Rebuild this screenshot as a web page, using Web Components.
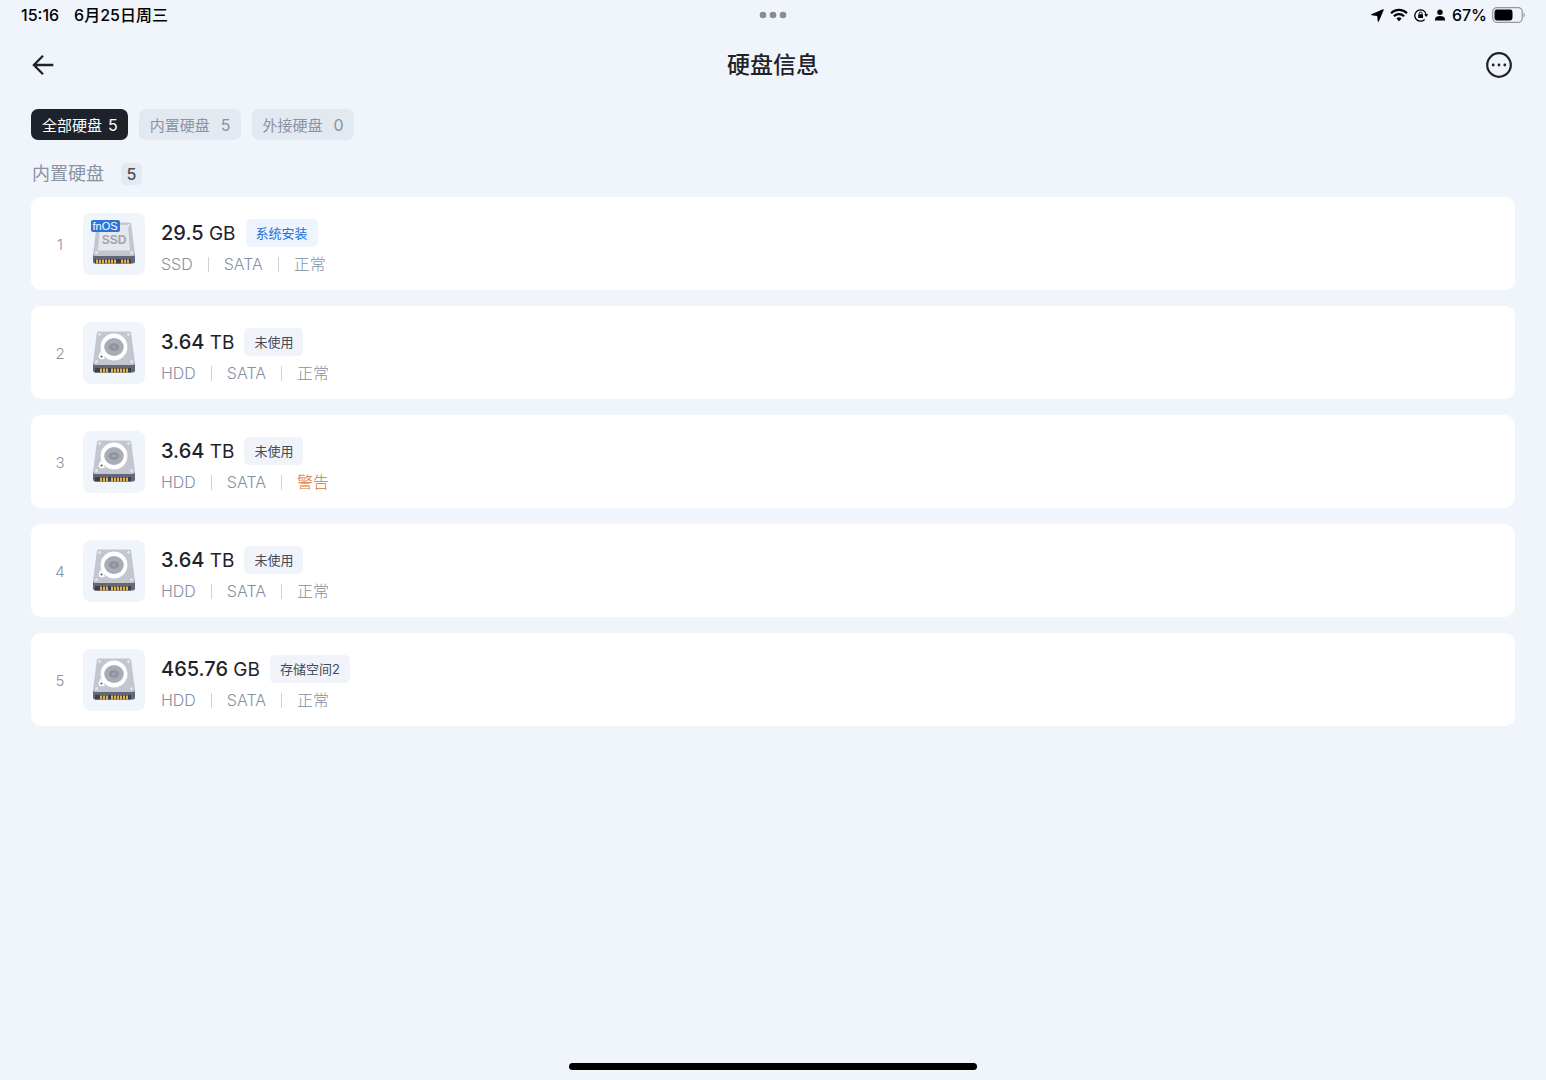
<!DOCTYPE html>
<html lang="zh-CN">
<head>
<meta charset="UTF-8">
<meta name="viewport" content="width=device-width, initial-scale=1.0">
<title>硬盘信息</title>
<style>
  body {
    margin: 0;
    background: #f0f4fb;
    color: #1f2329;
    font-family: Inter, 'Noto Sans CJK SC', sans-serif;
  }
</style>
</head>
<body>
<disk-page>
  <status-bar slot="status" time="15:16" date="6月25日周三" battery="67"></status-bar>
  <nav-header slot="header">硬盘信息</nav-header>
  <filter-tabs slot="filters">
    <filter-tab count="5" active>全部硬盘</filter-tab>
    <filter-tab count="5">内置硬盘</filter-tab>
    <filter-tab count="0">外接硬盘</filter-tab>
  </filter-tabs>
  <disk-group label="内置硬盘" count="5">
    <disk-card index="1" size="29.5" unit="GB" type="SSD" bus="SATA" status="正常" system>系统安装</disk-card>
    <disk-card index="2" size="3.64" unit="TB" type="HDD" bus="SATA" status="正常">未使用</disk-card>
    <disk-card index="3" size="3.64" unit="TB" type="HDD" bus="SATA" status="警告" warning>未使用</disk-card>
    <disk-card index="4" size="3.64" unit="TB" type="HDD" bus="SATA" status="正常">未使用</disk-card>
    <disk-card index="5" size="465.76" unit="GB" type="HDD" bus="SATA" status="正常">存储空间2</disk-card>
  </disk-group>
</disk-page>

<script>
class DiskPage extends HTMLElement {
  connectedCallback() {
    this.attachShadow({ mode: 'open' });
    this.shadowRoot.innerHTML = `
      <style>
        :host {
          display: flex;
          flex-direction: column;
          min-height: 100vh;
        }
        main {
          flex: 1;
          padding: 10px 31px 24px;
        }
        footer {
          display: flex;
          justify-content: center;
          padding-bottom: 10px;
        }
        .home {
          width: 408px;
          max-width: 60%;
          height: 7px;
          border-radius: 4px;
          background: #000;
        }
      </style>
      <slot name="status"></slot>
      <slot name="header"></slot>
      <main>
        <slot name="filters"></slot>
        <slot></slot>
      </main>
      <footer><div class="home"></div></footer>
    `;
  }
}
customElements.define('disk-page', DiskPage);

class StatusBar extends HTMLElement {
  connectedCallback() {
    this.attachShadow({ mode: 'open' });
    this.shadowRoot.innerHTML = `
      <style>
        :host {
          display: grid;
          grid-template-columns: 1fr auto 1fr;
          align-items: center;
          height: 30px;
          padding: 0 21px;
          font-size: 16px;
          font-weight: 500;
          line-height: 24px;
          color: #000;
        }
        svg { display: block; }
        .left { display: flex; gap: 15px; }
        .right {
          display: flex;
          align-items: center;
          justify-content: flex-end;
          gap: 6px;
        }
        .battery {
          display: flex;
          align-items: center;
          gap: 5px;
        }
      </style>
      <div class="left">
        <span>${this.getAttribute('time')}</span>
        <span>${this.getAttribute('date')}</span>
      </div>
      <svg width="28" height="8" viewBox="0 0 28 8" fill="#8a8c91">
        <circle cx="4" cy="4" r="3.3"/><circle cx="14" cy="4" r="3.3"/><circle cx="24" cy="4" r="3.3"/>
      </svg>
      <div class="right">
        <svg width="13" height="13" viewBox="0 0 13 13">
          <path d="M12.2.8 7.3 12.2 6.7 6.4.7 5.8z" stroke="#000" stroke-width="1.1" stroke-linejoin="round"/>
        </svg>
        <svg width="18" height="14" viewBox="0 0 18 14" fill="none" stroke="#000" stroke-width="2.2">
          <path d="M1 5.2a11.3 11.3 0 0 1 16 0"/>
          <path d="M3.9 8.3a7.2 7.2 0 0 1 10.2 0"/>
          <path d="M9 13.2 6.4 10.6a3.7 3.7 0 0 1 5.2 0z" fill="#000" stroke="none"/>
        </svg>
        <svg width="14" height="14" viewBox="0 0 14 14" fill="none" stroke="#000" stroke-width="1.3">
          <path d="M10.6 11.5A5.7 5.7 0 1 1 12.2 7"/>
          <path d="M10.2 6.3h4L12.2 9z" fill="#000" stroke="none"/>
          <rect x="4.2" y="6.3" width="4.8" height="3.7" rx=".6" fill="#000" stroke="none"/>
          <path d="M5.2 6.5V5.4a1.4 1.4 0 0 1 2.8 0v1.1" stroke-width="1"/>
        </svg>
        <svg width="12" height="12" viewBox="0 0 12 12">
          <circle cx="6" cy="3.2" r="2.7"/>
          <path d="M1 11.5V10.3C1 8 3.3 7 6 7s5 1 5 3.3v1.2z"/>
        </svg>
        <div class="battery">
          <span>${this.getAttribute('battery')}%</span>
          <svg width="33" height="16" viewBox="0 0 33 16">
            <rect x=".7" y=".7" width="29.6" height="14.6" rx="4.2" fill="none" stroke="#92959b" stroke-width="1.2"/>
            <rect x="2.5" y="2.5" width="18" height="11" rx="2.4"/>
            <path d="M31.6 5.6c1.6.7 1.6 4.1 0 4.8z" fill="#92959b"/>
          </svg>
        </div>
      </div>
    `;
  }
}
customElements.define('status-bar', StatusBar);

class NavHeader extends HTMLElement {
  connectedCallback() {
    this.attachShadow({ mode: 'open' });
    this.shadowRoot.innerHTML = `
      <style>
        :host {
          display: flex;
          align-items: center;
          justify-content: space-between;
          height: 69px;
          padding: 0 31px;
        }
        h1 {
          margin: 0;
          font-size: 23px;
          font-weight: 500;
          line-height: 32px;
        }
        button {
          display: flex;
          padding: 0;
          border: 0;
          background: none;
          color: inherit;
          cursor: pointer;
        }
      </style>
      <button type="button" aria-label="返回">
        <svg width="32" height="32" viewBox="0 0 32 32" fill="none" stroke="currentColor" stroke-width="2.3">
          <path d="M22.3 16H3.2M12 6.8 2.9 16l9.1 9.2"/>
        </svg>
      </button>
      <h1><slot></slot></h1>
      <button type="button" aria-label="更多">
        <svg width="32" height="32" viewBox="0 0 32 32">
          <circle cx="16" cy="16" r="11.8" fill="none" stroke="currentColor" stroke-width="2.2"/>
          <g fill="currentColor"><circle cx="10.2" cy="16" r="1.4"/><circle cx="16" cy="16" r="1.4"/><circle cx="21.8" cy="16" r="1.4"/></g>
        </svg>
      </button>
    `;
  }
}
customElements.define('nav-header', NavHeader);

class FilterTabs extends HTMLElement {
  connectedCallback() {
    this.attachShadow({ mode: 'open' });
    this.shadowRoot.innerHTML = `
      <style>
        :host {
          display: flex;
          flex-wrap: wrap;
          gap: 11px;
        }
      </style>
      <slot></slot>
    `;
  }
}
customElements.define('filter-tabs', FilterTabs);

class FilterTab extends HTMLElement {
  connectedCallback() {
    this.attachShadow({ mode: 'open' });
    this.shadowRoot.innerHTML = `
      <style>
        :host { display: block; }
        button {
          display: flex;
          align-items: center;
          gap: 11px;
          height: 31px;
          padding: 0 10px 0 11px;
          border: 0;
          border-radius: 7px;
          background: #e2e9f1;
          color: #8993a4;
          font: inherit;
          font-size: 15px;
          cursor: pointer;
        }
        .count { font-size: 16px; }
        :host([active]) button {
          gap: 6px;
          background: #1d222b;
          color: #fff;
        }
      </style>
      <button type="button" aria-pressed="${this.hasAttribute('active')}">
        <slot></slot>
        <span class="count">${this.getAttribute('count')}</span>
      </button>
    `;
  }
}
customElements.define('filter-tab', FilterTab);

class DiskGroup extends HTMLElement {
  connectedCallback() {
    this.attachShadow({ mode: 'open' });
    this.shadowRoot.innerHTML = `
      <style>
        :host { display: block; }
        header {
          display: flex;
          align-items: center;
          gap: 17px;
          padding: 23px 1px 12px;
        }
        h2 {
          margin: 0;
          font-size: 18px;
          font-weight: 400;
          line-height: 22px;
          color: #8993a4;
        }
        .count {
          min-width: 21px;
          border-radius: 5px;
          background: #e4eaf1;
          font-size: 16px;
          font-weight: 500;
          line-height: 22px;
          text-align: center;
          color: #4a505b;
        }
        .list {
          display: flex;
          flex-direction: column;
          gap: 16px;
        }
      </style>
      <header>
        <h2>${this.getAttribute('label')}</h2>
        <span class="count">${this.getAttribute('count')}</span>
      </header>
      <div class="list" role="list"><slot></slot></div>
    `;
  }
}
customElements.define('disk-group', DiskGroup);

class DiskIcon extends HTMLElement {
  connectedCallback() {
    const ssd = this.getAttribute('type') === 'SSD';
    // platter for spinning disks, printed label for SSDs
    const face = ssd ? `
      <path d="M17 12h28l2 25.5H15z" fill="#e6e8ee"/>
      <text x="31" y="31" text-anchor="middle" font-size="12" font-weight="700" fill="#a0a5b3">SSD</text>
    ` : `
      <circle cx="31" cy="25" r="13.4" fill="#fff"/>
      <circle cx="18.5" cy="34.5" r="2.8" fill="#fff"/>
      <path d="M17.6 29 22 37l-4.5.2-1.7-3z" fill="#fff"/>
      <ellipse cx="31" cy="25" rx="9.8" ry="9" fill="#a8acb7"/>
      <ellipse cx="31" cy="25" rx="5" ry="3.8" fill="#8f939f"/>
      <ellipse cx="31" cy="25" rx="2.2" ry="1.4" fill="#a0a4af"/>
      <circle cx="18.5" cy="34.5" r="1.1" fill="#555a68"/>
    `;
    const pins = ssd ? [13, 16, 19, 22, 25, 28, 31, 38, 41, 44] : [17, 20, 23, 28, 31, 34, 37, 40, 43];
    const badge = ssd ? `
      <rect x="8" y="7" width="29" height="12" rx="2" fill="#2d74d5"/>
      <text x="22" y="17" text-anchor="middle" font-size="11" fill="#fff">fnOS</text>
    ` : '';
    this.attachShadow({ mode: 'open' });
    this.shadowRoot.innerHTML = `
      <style>
        :host {
          display: block;
          border-radius: 8px;
          background: #f0f4fb;
        }
        svg { display: block; }
        text { font-family: 'Liberation Sans', sans-serif; }
      </style>
      <svg width="62" height="62" viewBox="0 0 62 62">
        <path d="M10 41h42v7.5a2 2 0 0 1-2 2H12a2 2 0 0 1-2-2z" fill="#636777"/>
        <path d="M15.8 9.5h30.4a2 2 0 0 1 2 1.8L52 41a2 2 0 0 1-2 2H12a2 2 0 0 1-2-2l3.8-29.7a2 2 0 0 1 2-1.8z" fill="#c3c6cf"/>
        <g fill="#e6e8ed">
          <circle cx="16.5" cy="12.5" r="1.4"/><circle cx="45.5" cy="12.5" r="1.4"/>
          <circle cx="13.5" cy="39.7" r="1.4"/><circle cx="48.5" cy="39.7" r="1.4"/>
        </g>
        ${face}
        <path d="M12 46h36v4.5H12z" fill="#3c3e49"/>
        ${pins.map(x => `<rect x="${x}" y="46.5" width="2" height="4" fill="#e2b34f"/>`).join('')}
        ${badge}
      </svg>
    `;
  }
}
customElements.define('disk-icon', DiskIcon);

class DiskCard extends HTMLElement {
  connectedCallback() {
    const get = name => this.getAttribute(name);
    this.setAttribute('role', 'listitem');
    this.attachShadow({ mode: 'open' });
    this.shadowRoot.innerHTML = `
      <style>
        :host {
          display: flex;
          align-items: center;
          padding: 16px 16px 15px 18px;
          border-radius: 10px;
          background: #fff;
        }
        .index {
          width: 22px;
          margin-right: 12px;
          font-size: 15px;
          font-weight: 300;
          text-align: center;
          color: #8993a4;
        }
        .info {
          display: flex;
          flex-direction: column;
          gap: 6px;
          margin-left: 16px;
          padding-top: 6px;
        }
        .title {
          display: flex;
          align-items: center;
          gap: 10px;
        }
        .size {
          font-size: 20px;
          font-weight: 500;
          line-height: 28px;
        }
        .unit {
          font-size: 19px;
          font-weight: 400;
          line-height: 20px;
        }
        .tag {
          padding: 0 10px;
          border-radius: 5px;
          background: #f0f4fa;
          font-size: 13px;
          line-height: 28px;
          color: #444b58;
        }
        :host([system]) .tag {
          background: #edf4fd;
          color: #2371dc;
        }
        .meta {
          display: flex;
          align-items: center;
          gap: 15px;
          font-size: 16px;
          font-weight: 300;
          line-height: 22px;
          color: #8490a3;
        }
        .meta i {
          width: 1px;
          height: 15px;
          background: #ccd3dd;
        }
        :host([warning]) .status { color: #e0702c; }
      </style>
      <span class="index">${get('index')}</span>
      <disk-icon type="${get('type')}"></disk-icon>
      <div class="info">
        <div class="title">
          <span class="size">${get('size')} <span class="unit">${get('unit')}</span></span>
          <span class="tag"><slot></slot></span>
        </div>
        <div class="meta">
          <span>${get('type')}</span><i></i>
          <span>${get('bus')}</span><i></i>
          <span class="status">${get('status')}</span>
        </div>
      </div>
    `;
  }
}
customElements.define('disk-card', DiskCard);
</script>
</body>
</html>
